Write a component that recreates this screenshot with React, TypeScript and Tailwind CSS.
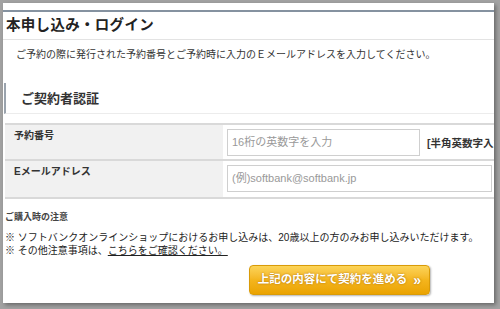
import React from "react";

const font = "font-['Liberation_Sans','Noto_Sans_CJK_JP',sans-serif]";

function FormRow({
  label,
  children,
  last,
}: {
  label: string;
  children: React.ReactNode;
  last?: boolean;
}) {
  return (
    <div className={`flex h-[36px] ${last ? "" : "border-b-2 border-[#d9d9d9]"}`}>
      <div className="w-[218px] shrink-0 bg-[#f1f1f1] pl-[9px] pt-[5px] text-[10px] font-bold leading-[12px] text-[#333]">
        {label}
      </div>
      <div className="flex flex-1 items-start gap-[7px] pl-[4px] pt-[4px] overflow-hidden">
        {children}
      </div>
    </div>
  );
}

export default function App() {
  return (
    <div className={`w-[500px] h-[309px] overflow-hidden bg-[#a2a2a2] pl-[3px] pt-[3px] ${font}`}>
      <div className="w-[491px] h-[300px] overflow-hidden bg-white shadow-[2px_2px_4px_rgba(0,0,0,0.35)] text-[#333]">
        {/* header */}
        <div className="mt-[7px] border-t-2 border-[#8592a0]">
          <div className="flex h-[28px] items-center border-b border-[#e3e3e3] pl-[3px]">
            <h1 className="text-[14.5px] font-bold leading-none tracking-[0.3px] text-[#222]">
              本申し込み・ログイン
            </h1>
          </div>
          <p className="mt-[8px] pl-[13px] text-[10px] leading-[14px] text-[#333]">
            ご予約の際に発行された予約番号とご予約時に入力のＥメールアドレスを入力してください。
          </p>
        </div>

        {/* section */}
        <div className="mt-[21px] ml-[1px] flex h-[31px] items-center border-l-2 border-b border-l-[#9aa3ad] border-b-[#ececec]">
          <h2 className="pl-[15px] text-[13px] font-bold leading-none text-[#333]">ご契約者認証</h2>
        </div>

        <div className="mt-[9px] ml-[2px] border-y-2 border-[#d9d9d9]">
          <FormRow label="予約番号">
            <div className="flex h-[27px] w-[193px] shrink-0 items-center border border-[#cfcfcf] bg-white pl-[4px] text-[11px] text-[#999]">
              16桁の英数字を入力
            </div>
            <span className="mt-[9px] whitespace-nowrap text-[10.5px] font-bold leading-none text-[#333]">
              [半角英数字入力]
            </span>
          </FormRow>
          <FormRow label="Eメールアドレス" last>
            <div className="flex h-[27px] w-[265px] shrink-0 items-center border border-[#cfcfcf] bg-white pl-[4px] text-[11px] text-[#999]">
              (例)softbank@softbank.jp
            </div>
          </FormRow>
        </div>

        {/* notes */}
        <div className="mt-[13px] pl-[2px]">
          <p className="text-[9px] font-bold leading-[11px] text-[#444]">ご購入時の注意</p>
          <div className="mt-[8px] text-[10px] leading-[13px] text-[#222] whitespace-nowrap">
            <p>※ ソフトバンクオンラインショップにおけるお申し込みは、20歳以上の方のみお申し込みいただけます。</p>
            <p>
              ※ その他注意事項は、
              <a href="#" className="underline">こちらをご確認ください。</a>
            </p>
          </div>
        </div>

        {/* submit */}
        <div className="mt-[8px] pl-[246px]">
          <button className="flex h-[30px] w-[181px] items-center justify-center gap-[6px] rounded-[4px] border border-[#d99b08] bg-gradient-to-b from-[#fcd457] via-[#f4b51c] to-[#eaa300] text-[11.5px] font-bold text-white shadow-[1px_1px_2px_rgba(0,0,0,0.3)] [text-shadow:0_0_2px_rgba(150,90,0,0.8)]">
            上記の内容にて契約を進める
            <span className="text-[14px] leading-none">»</span>
          </button>
        </div>
      </div>
    </div>
  );
}
